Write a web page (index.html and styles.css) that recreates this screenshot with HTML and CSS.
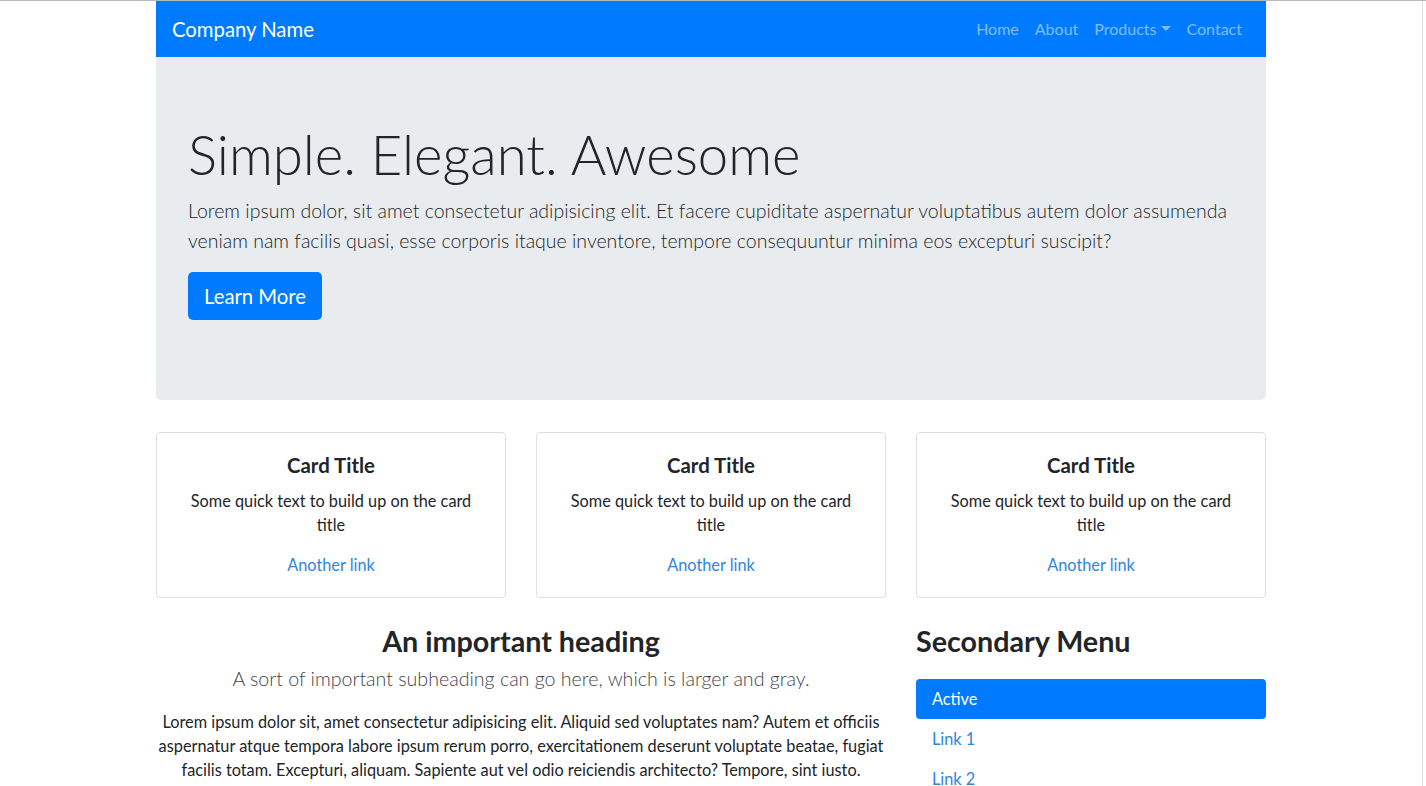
FILE: index.html
```html
<!DOCTYPE html>
<html lang="en">
<head>
<meta charset="utf-8">
<title>Company Name</title>
<link rel="stylesheet" href="styles.css">
</head>
<body>
<div class="page">
  <div class="container">
    <nav class="navbar">
      <a class="brand" href="#">Company Name</a>
      <ul class="nav">
        <li><a class="nav-link" href="#">Home</a></li>
        <li><a class="nav-link" href="#">About</a></li>
        <li><a class="nav-link dropdown" href="#">Products<span class="caret"></span></a></li>
        <li><a class="nav-link" href="#">Contact</a></li>
      </ul>
    </nav>

    <header class="jumbotron">
      <h1 class="display">Simple. Elegant. Awesome</h1>
      <p class="jumbo-lead">Lorem ipsum dolor, sit amet consectetur adipisicing elit. Et facere cupiditate aspernatur voluptatibus autem dolor assumenda veniam nam facilis quasi, esse corporis itaque inventore, tempore consequuntur minima eos excepturi suscipit?</p>
      <p class="btn-wrap"><a class="btn-lg" href="#">Learn More</a></p>
    </header>

    <section class="cards">
      <div class="card">
        <h5 class="card-title">Card Title</h5>
        <p class="card-text">Some quick text to build up on the card title</p>
        <a class="card-link" href="#">Another link</a>
      </div>
      <div class="card">
        <h5 class="card-title">Card Title</h5>
        <p class="card-text">Some quick text to build up on the card title</p>
        <a class="card-link" href="#">Another link</a>
      </div>
      <div class="card">
        <h5 class="card-title">Card Title</h5>
        <p class="card-text">Some quick text to build up on the card title</p>
        <a class="card-link" href="#">Another link</a>
      </div>
    </section>

    <section class="lower">
      <div class="main-col">
        <h2 class="heading">An important heading</h2>
        <p class="sub-lead">A sort of important subheading can go here, which is larger and gray.</p>
        <p class="body-text">Lorem ipsum dolor sit, amet consectetur adipisicing elit. Aliquid sed voluptates nam? Autem et officiis aspernatur atque tempora labore ipsum rerum porro, exercitationem deserunt voluptate beatae, fugiat facilis totam. Excepturi, aliquam. Sapiente aut vel odio reiciendis architecto? Tempore, sint iusto.</p>
      </div>
      <aside class="side-col">
        <h2 class="side-heading">Secondary Menu</h2>
        <ul class="pills">
          <li><a class="pill active" href="#">Active</a></li>
          <li><a class="pill" href="#">Link 1</a></li>
          <li><a class="pill" href="#">Link 2</a></li>
        </ul>
      </aside>
    </section>
  </div>
</div>
</body>
</html>
```
FILE: styles.css
```css
* { box-sizing: border-box; }
html, body { margin: 0; padding: 0; }
body {
  font-family: "Lato", "Open Sans", sans-serif;
  font-size: 16.3px;
  line-height: 24px;
  color: #212529;
  background: #fff;
  border-top: 1px solid #b9b9b9;
}
a { text-decoration: none; }
ul { list-style: none; margin: 0; padding: 0; }
h1, h2, h5, p { margin: 0; }

.page {
  width: 1423px;
  border-right: 1px solid #e2e2e2;
  min-height: 785px;
}
.container {
  width: 1110px;
  margin: 0 auto;
}

/* navbar */
.navbar {
  height: 56px;
  background: #007bff;
  padding: 8px 16px;
  display: flex;
  align-items: center;
  justify-content: space-between;
}
.brand {
  color: #fff;
  font-size: 20.3px;
  line-height: 30px;
  padding: 5px 0;
}
.nav { display: flex; }
.nav-link {
  display: flex;
  align-items: center;
  color: rgba(255,255,255,.5);
  font-size: 16px;
  line-height: 24px;
  padding: 8px 8px;
}
.caret {
  display: inline-block;
  margin-left: 4px;
  width: 0; height: 0;
  border-top: 5px solid rgba(255,255,255,.5);
  border-left: 5px solid transparent;
  border-right: 5px solid transparent;
  margin-bottom: 2px;
}

/* jumbotron */
.jumbotron {
  background: #e9ecef;
  padding: 64px 32px;
  border-radius: 0 0 5px 5px;
  margin-bottom: 32px;
}
.display {
  font-size: 54.5px;
  font-weight: 300;
  line-height: 67px;
  margin-bottom: 8px;
}
.jumbo-lead {
  font-size: 19.5px;
  font-weight: 300;
  line-height: 30px;
  margin-bottom: 16px;
}
.btn-wrap { margin-bottom: 16px; }
.btn-lg {
  display: inline-block;
  background: #007bff;
  color: #fff;
  font-size: 20.3px;
  line-height: 30px;
  padding: 9px 16px;
  border-radius: 5px;
}

/* cards */
.cards {
  display: grid;
  grid-template-columns: repeat(3, 1fr);
  gap: 30px;
  margin-bottom: 24px;
}
.card {
  border: 1px solid rgba(0,0,0,.125);
  border-radius: 4px;
  padding: 20px;
  text-align: center;
}
.card-title {
  font-size: 20.4px;
  font-weight: 700;
  line-height: 24px;
  margin-bottom: 12px;
}
.card-text { margin-bottom: 16px; }
.card-link { color: #2f84e0; }

/* lower section */
.lower {
  display: grid;
  grid-template-columns: 730px 350px;
  gap: 30px;
}
.main-col { text-align: center; }
.heading, .side-heading {
  font-size: 28.7px;
  font-weight: 700;
  line-height: 38px;
}
.heading { margin-bottom: 4px; }
.sub-lead {
  font-size: 19.6px;
  font-weight: 300;
  line-height: 30px;
  color: #3f454b;
  margin-bottom: 16px;
}
.side-heading { margin-bottom: 19px; }
.pill {
  display: block;
  padding: 8px 16px;
  line-height: 24px;
  color: #2f84e0;
  border-radius: 4px;
}
.pill.active {
  background: #007bff;
  color: #fff;
}
```
